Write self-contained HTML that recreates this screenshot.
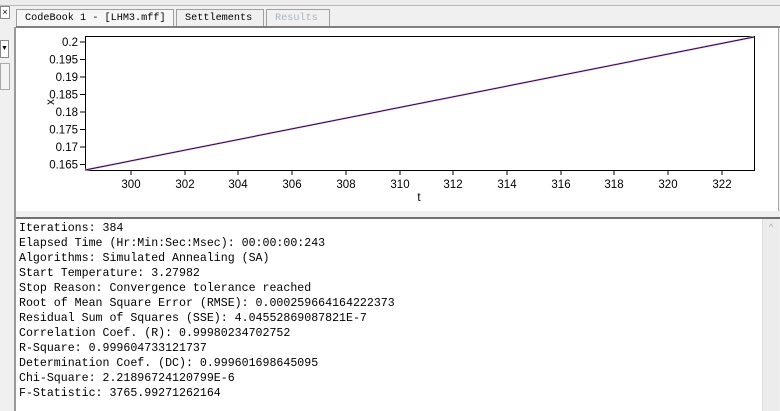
<!DOCTYPE html>
<html><head><style>
body{margin:0;width:780px;height:411px;overflow:hidden;background:#f0f0f0;font-family:"Liberation Sans",sans-serif;position:relative}
.a{position:absolute}
.tab{position:absolute;top:9px;height:17px;border:1px solid #a0a0a0;border-bottom:none;background:#f0f0f0;font-family:"Liberation Mono",monospace;font-size:10.2px;line-height:17px;padding-left:8px;box-sizing:border-box;white-space:nowrap;overflow:hidden}
.txt{font-family:"Liberation Mono",monospace;font-size:11.6px;line-height:15px;color:#000;white-space:pre}
</style></head><body>
<div class="a" style="left:0;top:0;width:780px;height:5px;background:#ececec;border-bottom:1px solid #b8b8b8"></div>
<div class="a" style="left:0;top:6px;width:8px;height:11px;border:1px solid #888;background:#fff;font-size:9px;line-height:10px;text-align:center">×</div>
<div class="a" style="left:0;top:40px;width:7px;height:16px;border:1px solid #888;background:#fff;font-size:7px;line-height:16px">▼</div>
<div class="a" style="left:0;top:63px;width:8px;height:25px;border:1px solid #aaa;background:#f4f4f4"></div>
<div class="a" style="left:14px;top:27px;width:2px;height:384px;background:#999"></div>
<div class="tab" style="left:16px;width:158px;background:#f6f6f6">CodeBook 1 - [LHM3.mff]</div>
<div class="tab" style="left:176px;width:88px">Settlements</div>
<div class="tab" style="left:266px;width:64px;color:#a8b4c4">Results</div>
<div class="a" style="left:16px;top:26px;width:764px;height:2px;background:#808080"></div>
<div class="a" style="left:16px;top:28px;width:762px;height:183px;background:#fff;border-right:1px solid #aaa"></div>
<svg class="a" style="left:0;top:0" width="780" height="215">
<rect x="85.5" y="36.5" width="669" height="134" fill="#fff" stroke="#000"/>
<g font-family="Liberation Sans,sans-serif" font-size="11.5" fill="#000">
<g text-anchor="end">
<text x="78" y="46">0.2</text><text x="78" y="63.5">0.195</text><text x="78" y="81">0.19</text><text x="78" y="98.5">0.185</text><text x="78" y="116">0.18</text><text x="78" y="133.5">0.175</text><text x="78" y="151">0.17</text><text x="78" y="168.5">0.165</text>
</g>
<g stroke="#000"><line x1="80" x2="85" y1="42" y2="42"/><line x1="80" x2="85" y1="59.5" y2="59.5"/><line x1="80" x2="85" y1="77" y2="77"/><line x1="80" x2="85" y1="94.5" y2="94.5"/><line x1="80" x2="85" y1="112" y2="112"/><line x1="80" x2="85" y1="129.5" y2="129.5"/><line x1="80" x2="85" y1="147" y2="147"/><line x1="80" x2="85" y1="164.5" y2="164.5"/></g>
<g text-anchor="middle">
<text x="131" y="188">300</text><text x="185" y="188">302</text><text x="238" y="188">304</text><text x="292" y="188">306</text><text x="346" y="188">308</text><text x="400" y="188">310</text><text x="453" y="188">312</text><text x="507" y="188">314</text><text x="561" y="188">316</text><text x="614" y="188">318</text><text x="668" y="188">320</text><text x="722" y="188">322</text>
<text x="419" y="201">t</text>
<text x="50" y="106" transform="rotate(-90 50 102)">x</text>
</g>
<g stroke="#000"><line x1="131" x2="131" y1="171" y2="175"/><line x1="185" x2="185" y1="171" y2="175"/><line x1="238" x2="238" y1="171" y2="175"/><line x1="292" x2="292" y1="171" y2="175"/><line x1="346" x2="346" y1="171" y2="175"/><line x1="400" x2="400" y1="171" y2="175"/><line x1="453" x2="453" y1="171" y2="175"/><line x1="507" x2="507" y1="171" y2="175"/><line x1="561" x2="561" y1="171" y2="175"/><line x1="614" x2="614" y1="171" y2="175"/><line x1="668" x2="668" y1="171" y2="175"/><line x1="722" x2="722" y1="171" y2="175"/></g>
</g>
<line x1="85" y1="170" x2="754" y2="37" stroke="#f0c0f0" stroke-width="2.2"/>
<line x1="85" y1="170" x2="754" y2="37" stroke="#1a0a40" stroke-width="1"/>
</svg>
<div class="a" style="left:16px;top:211px;width:764px;height:6px;background:#f0f0f0"></div>
<div class="a" style="left:16px;top:217px;width:764px;height:2px;background:#707070"></div>
<div class="a" style="left:16px;top:219px;width:746px;height:192px;background:#fff"></div>
<div class="a" style="left:762px;top:219px;width:16px;height:192px;background:#ececec;border-left:1px solid #ddd;color:#aaa;font-size:9px;text-align:center;line-height:16px">^</div>
<div class="a txt" style="left:19px;top:221px">Iterations: 384
Elapsed Time (Hr:Min:Sec:Msec): 00:00:00:243
Algorithms: Simulated Annealing (SA)
Start Temperature: 3.27982
Stop Reason: Convergence tolerance reached
Root of Mean Square Error (RMSE): 0.000259664164222373
Residual Sum of Squares (SSE): 4.04552869087821E-7
Correlation Coef. (R): 0.99980234702752
R-Square: 0.999604733121737
Determination Coef. (DC): 0.999601698645095
Chi-Square: 2.21896724120799E-6
F-Statistic: 3765.99271262164</div>
</body></html>
